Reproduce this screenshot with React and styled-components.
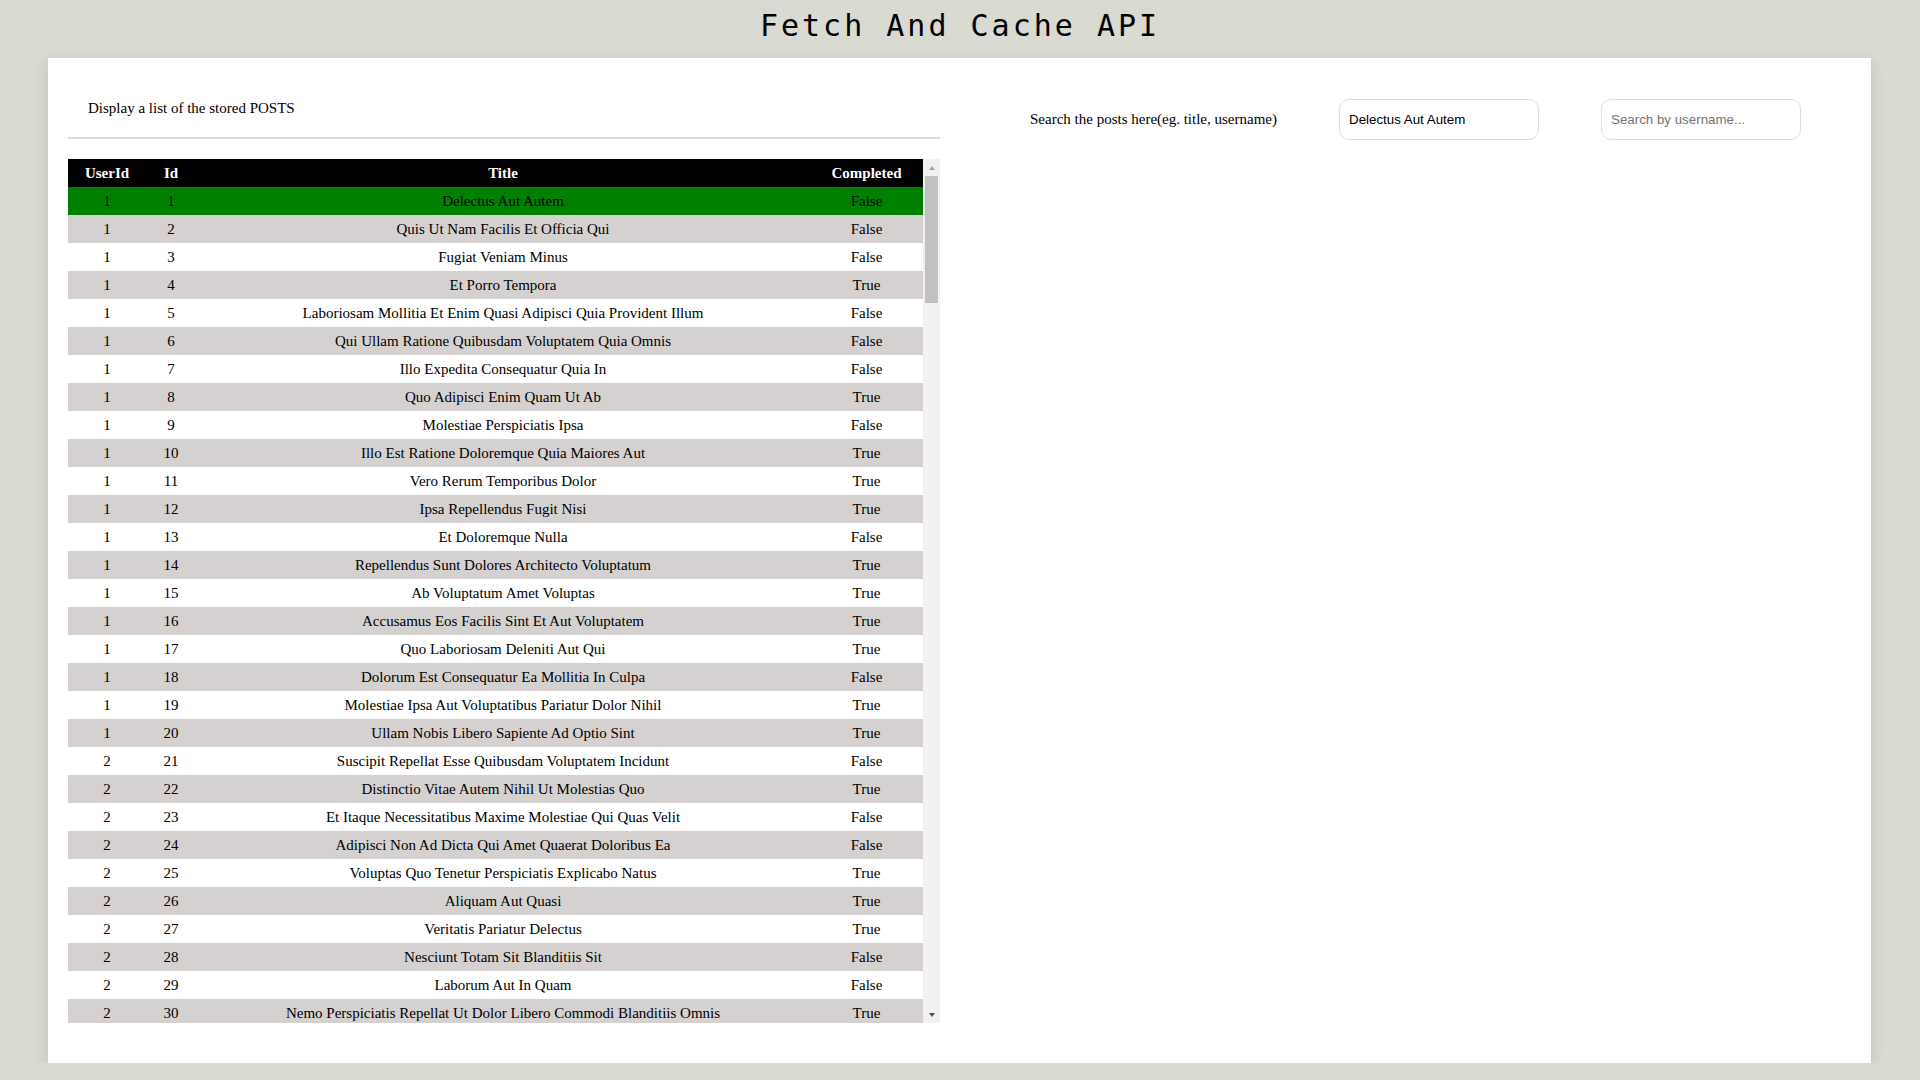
import React, { useState } from 'react';
import styled, { createGlobalStyle } from 'styled-components';

const GlobalStyle = createGlobalStyle`
  body {
    margin: 0;
    background: #d9dad2;
    font-family: "Liberation Serif", "Times New Roman", serif;
    color: #000;
  }
`;

const firstTodos = [
    [1, 1, 'delectus aut autem', false],
    [1, 2, 'quis ut nam facilis et officia qui', false],
    [1, 3, 'fugiat veniam minus', false],
    [1, 4, 'et porro tempora', true],
    [1, 5, 'laboriosam mollitia et enim quasi adipisci quia provident illum', false],
    [1, 6, 'qui ullam ratione quibusdam voluptatem quia omnis', false],
    [1, 7, 'illo expedita consequatur quia in', false],
    [1, 8, 'quo adipisci enim quam ut ab', true],
    [1, 9, 'molestiae perspiciatis ipsa', false],
    [1, 10, 'illo est ratione doloremque quia maiores aut', true],
    [1, 11, 'vero rerum temporibus dolor', true],
    [1, 12, 'ipsa repellendus fugit nisi', true],
    [1, 13, 'et doloremque nulla', false],
    [1, 14, 'repellendus sunt dolores architecto voluptatum', true],
    [1, 15, 'ab voluptatum amet voluptas', true],
    [1, 16, 'accusamus eos facilis sint et aut voluptatem', true],
    [1, 17, 'quo laboriosam deleniti aut qui', true],
    [1, 18, 'dolorum est consequatur ea mollitia in culpa', false],
    [1, 19, 'molestiae ipsa aut voluptatibus pariatur dolor nihil', true],
    [1, 20, 'ullam nobis libero sapiente ad optio sint', true],
    [2, 21, 'suscipit repellat esse quibusdam voluptatem incidunt', false],
    [2, 22, 'distinctio vitae autem nihil ut molestias quo', true],
    [2, 23, 'et itaque necessitatibus maxime molestiae qui quas velit', false],
    [2, 24, 'adipisci non ad dicta qui amet quaerat doloribus ea', false],
    [2, 25, 'voluptas quo tenetur perspiciatis explicabo natus', true],
    [2, 26, 'aliquam aut quasi', true],
    [2, 27, 'veritatis pariatur delectus', true],
    [2, 28, 'nesciunt totam sit blanditiis sit', false],
    [2, 29, 'laborum aut in quam', false],
    [2, 30, 'nemo perspiciatis repellat ut dolor libero commodi blanditiis omnis', true],
    [2, 31, 'repudiandae totam in est sint facere fuga', false],
    [2, 32, 'earum doloribus ea doloremque quis', false],
    [2, 33, 'sint sit aut vero', false],
    [2, 34, 'porro aut necessitatibus eaque distinctio', false],
    [2, 35, 'repellendus veritatis molestias dicta incidunt', true],
    [2, 36, 'excepturi deleniti adipisci voluptatem et neque optio illum ad', true],
    [2, 37, 'sunt cum tempora', false],
    [2, 38, 'totam quia non', false],
    [2, 39, 'doloremque quibusdam asperiores libero corrupti illum qui omnis', false],
    [2, 40, 'totam atque quo nesciunt', true],
];

const words = ['aut', 'qui', 'et', 'quia', 'sint', 'omnis', 'ut', 'dolor', 'voluptas', 'nihil',
    'libero', 'quam', 'enim', 'ipsa', 'est', 'rerum', 'natus', 'velit', 'eos', 'illum'];

// rest of the stored posts, filled so the list has its full 200 rows
const todos = firstTodos.map(([userId, id, title, completed]) => ({ userId, id, title, completed }));
for (let id = 41; id <= 200; id++) {
    const n = 3 + (id * 7) % 5;
    const t = [];
    for (let k = 0; k < n; k++) t.push(words[(id * 13 + k * 17) % words.length]);
    todos.push({ userId: Math.ceil(id / 20), id, title: t.join(' '), completed: (id * 31) % 3 === 0 });
}

const ROW = 28;
const VIEW = 864;
const ARROW = 17;
const contentHeight = ROW * (todos.length + 1);
const trackHeight = VIEW - ARROW * 2;
const thumbHeight = Math.round(trackHeight * VIEW / contentHeight);

export default function App() {
    const [search, setSearch] = useState('Delectus Aut Autem');
    const [user, setUser] = useState('');
    const [scrollTop, setScrollTop] = useState(0);

    const thumbOffset = (trackHeight - thumbHeight) * scrollTop / (contentHeight - VIEW);

    return (
        <>
            <GlobalStyle />
            <Title>Fetch And Cache API</Title>
            <Card>
                <ListSection>
                    <ListHeader>Display a list of the stored POSTS</ListHeader>
                    <TableArea>
                        <TableScroll onScroll={e => setScrollTop(e.target.scrollTop)}>
                            <Table>
                                <colgroup>
                                    <col style={{ width: 78 }} />
                                    <col style={{ width: 50 }} />
                                    <col />
                                    <col style={{ width: 113 }} />
                                </colgroup>
                                <thead>
                                    <tr>
                                        <Th>UserId</Th>
                                        <Th>Id</Th>
                                        <Th>Title</Th>
                                        <Th>Completed</Th>
                                    </tr>
                                </thead>
                                <tbody>
                                    { todos.map((t, i) => (
                                        <Row key={t.id} $index={i} $match={t.title.toLowerCase() === search.toLowerCase()}>
                                            <Td>{t.userId}</Td>
                                            <Td>{t.id}</Td>
                                            <Td>{t.title}</Td>
                                            <Td>{t.completed ? 'True' : 'False'}</Td>
                                        </Row>
                                    )) }
                                </tbody>
                            </Table>
                        </TableScroll>
                        <ScrollRail>
                            <ArrowButton><Arrow $up $color="#a3a3a3" /></ArrowButton>
                            <ThumbTrack>
                                <Thumb style={{ height: thumbHeight, marginTop: thumbOffset }} />
                            </ThumbTrack>
                            <ArrowButton><Arrow $color="#505050" /></ArrowButton>
                        </ScrollRail>
                    </TableArea>
                </ListSection>
                <SearchSection>
                    <SearchLabel>Search the posts here(eg. title, username)</SearchLabel>
                    <SearchInput value={search} onChange={e => setSearch(e.target.value)} />
                    <SearchInput value={user} placeholder="Search by username..." onChange={e => setUser(e.target.value)} />
                </SearchSection>
            </Card>
        </>
    );
}

const Title = styled.h1`
    margin: 0;
    height: 58px;
    line-height: 52px;
    text-align: center;
    font-family: "DejaVu Sans Mono", monospace;
    font-weight: normal;
    font-size: 30px;
    letter-spacing: 3px;
`;

const Card = styled.div`
    margin: 0 49px 0 48px;
    height: 1005px;
    box-sizing: border-box;
    padding: 20px;
    background: #fff;
    box-shadow: 0 4px 14px rgba(0, 0, 0, 0.12);
    display: flex;
    align-items: flex-start;
`;

const ListSection = styled.div`
    width: 872px;
    flex-shrink: 0;
`;

const ListHeader = styled.div`
    height: 59px;
    padding: 2px 0 0 20px;
    box-sizing: border-box;
    display: flex;
    align-items: center;
    font-size: 15px;
    border-bottom: 2px solid #dcdcdc;
    box-sizing: content-box;
    height: 57px;
`;

const TableArea = styled.div`
    margin-top: 20px;
    height: ${VIEW}px;
    display: flex;
`;

const TableScroll = styled.div`
    flex: 1;
    overflow-y: auto;
    scrollbar-width: none;
    &::-webkit-scrollbar { display: none; }
`;

const ScrollRail = styled.div`
    width: 17px;
    flex-shrink: 0;
    background: #f1f1f1;
    display: flex;
    flex-direction: column;
`;

const ArrowButton = styled.div`
    height: ${ARROW}px;
    display: flex;
    align-items: center;
    justify-content: center;
`;

const Arrow = styled.div`
    width: 0;
    height: 0;
    border-left: 3.5px solid transparent;
    border-right: 3.5px solid transparent;
    ${p => p.$up ? `border-bottom: 4px solid ${p.$color};` : `border-top: 4px solid ${p.$color};`}
`;

const ThumbTrack = styled.div`
    flex: 1;
    display: flex;
    flex-direction: column;
`;

const Thumb = styled.div`
    margin: 0 2px;
    background: #c1c1c1;
`;

const Table = styled.table`
    width: 100%;
    border-collapse: collapse;
    table-layout: fixed;
    font-size: 15px;
`;

const Th = styled.th`
    height: ${ROW}px;
    padding: 0;
    background: #000;
    color: #fff;
    font-weight: bold;
    text-align: center;
`;

const Row = styled.tr`
    background: ${p => p.$match ? '#008000' : p.$index % 2 === 1 ? '#d5d1d1' : '#fff'};
`;

const Td = styled.td`
    height: ${ROW}px;
    padding: 0;
    text-align: center;
    text-transform: capitalize;
    white-space: nowrap;
`;

const SearchSection = styled.div`
    display: flex;
    align-items: center;
    gap: 62px;
    padding: 21px 0 0 90px;
`;

const SearchLabel = styled.span`
    font-size: 15px;
`;

const SearchInput = styled.input`
    width: 200px;
    height: 41px;
    box-sizing: border-box;
    padding: 0 9px;
    border: 1px solid #dedede;
    border-radius: 10px;
    outline: none;
    font-family: "Liberation Sans", Arial, sans-serif;
    font-size: 13.333px;
    color: #000;

    &::placeholder { color: #757575; }
`;
